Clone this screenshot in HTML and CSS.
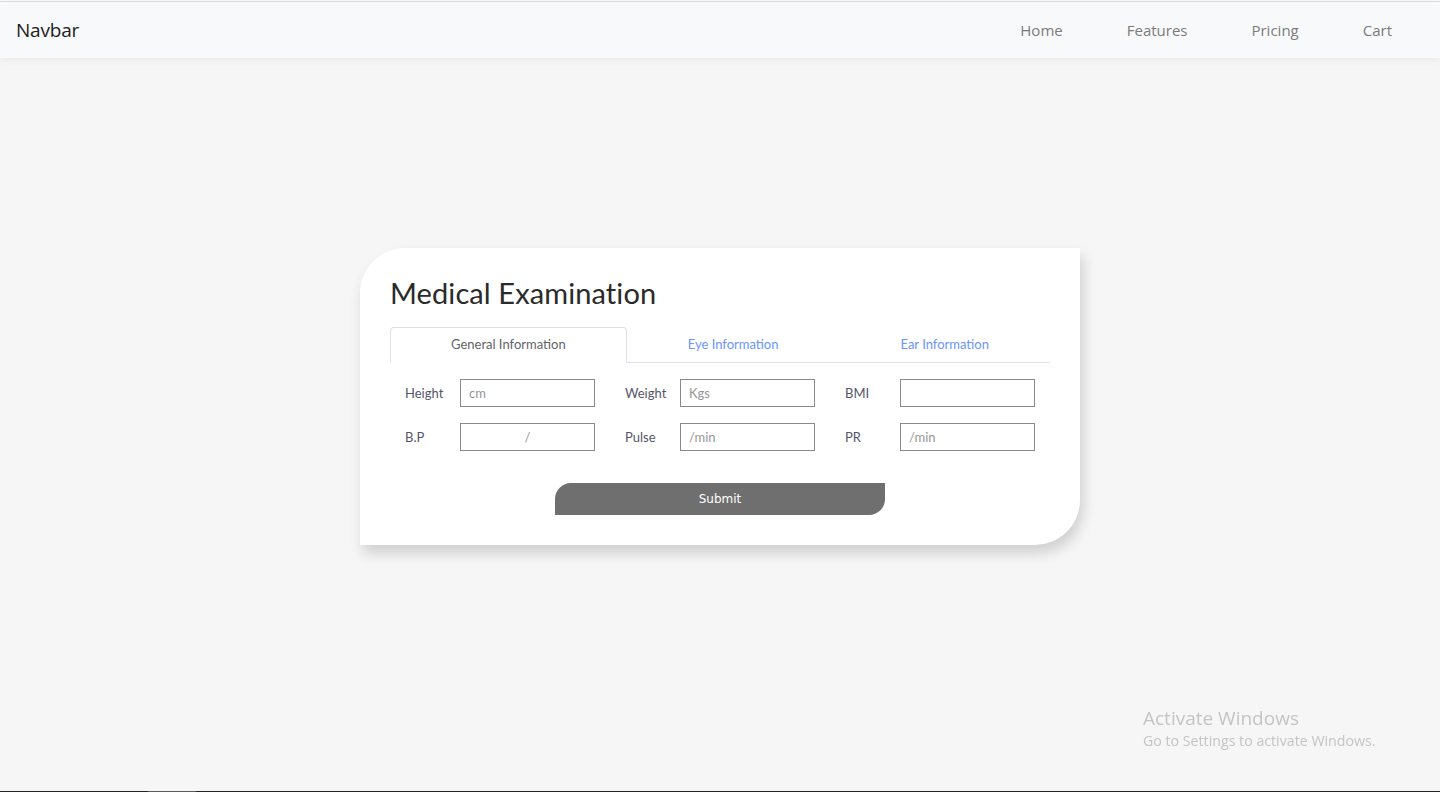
FILE: index.html
```html
<!DOCTYPE html>
<html lang="en">
<head>
<meta charset="utf-8">
<title>Medical Examination</title>
<link rel="stylesheet" href="styles.css">
</head>
<body>
<div class="topline"></div>
<nav class="navbar">
  <a class="brand" href="#">Navbar</a>
  <ul class="nav-links">
    <li><a href="#">Home</a></li>
    <li><a href="#">Features</a></li>
    <li><a href="#">Pricing</a></li>
    <li><a href="#">Cart</a></li>
  </ul>
</nav>
<main class="page">
  <section class="card">
    <h2 class="card-title">Medical Examination</h2>
    <ul class="tabs">
      <li class="tab active">General Information</li>
      <li class="tab">Eye Information</li>
      <li class="tab">Ear Information</li>
    </ul>
    <form class="tab-pane">
      <div class="fields">
        <label class="field"><span class="lbl">Height</span><input type="text" placeholder="cm"></label>
        <label class="field"><span class="lbl">Weight</span><input type="text" placeholder="Kgs"></label>
        <label class="field"><span class="lbl">BMI</span><input type="text"></label>
        <label class="field"><span class="lbl">B.P</span><input type="text" class="center" placeholder="/"></label>
        <label class="field"><span class="lbl">Pulse</span><input type="text" placeholder="/min"></label>
        <label class="field"><span class="lbl">PR</span><input type="text" placeholder="/min"></label>
      </div>
      <div class="actions">
        <button type="button" class="submit">Submit</button>
      </div>
    </form>
  </section>
</main>
<div class="watermark">
  <div class="wm-title">Activate Windows</div>
  <div class="wm-sub">Go to Settings to activate Windows.</div>
</div>
<div class="taskbar-edge"><span class="seg"></span></div>
</body>
</html>
```
FILE: styles.css
```css
* { box-sizing: border-box; }
html, body { margin: 0; padding: 0; }
body {
  background: #f6f6f6;
  font-family: "Lato", "Noto Sans", sans-serif;
  height: 792px;
  overflow: hidden;
}
.topline { height: 1px; background: #fbfbfb; }
.navbar {
  height: 57px;
  border-top: 1px solid #dcdcdc;
  background: #f8f9fa;
  display: flex;
  align-items: center;
  justify-content: space-between;
  padding: 0 16px;
  box-shadow: 0 2px 8px rgba(0,0,0,0.06);
  position: relative;
  z-index: 1;
}
.brand {
  font-family: "Open Sans", "Noto Sans", sans-serif;
  font-size: 19px;
  color: #1c1c1c;
  text-decoration: none;
  letter-spacing: -0.2px;
}
.nav-links {
  list-style: none;
  display: flex;
  margin: 0;
  padding: 0;
}
.nav-links a {
  display: block;
  padding: 0 32px;
  font-family: "Open Sans", "Noto Sans", sans-serif;
  font-size: 15px;
  color: #7b7b7c;
  text-decoration: none;
}
.page {
  display: flex;
  justify-content: center;
  padding-top: 190px;
}
.card {
  width: 720px;
  background: #fff;
  border-radius: 45px 0 45px 0;
  box-shadow: 3px 8px 14px rgba(0,0,0,0.16);
  padding: 30px 30px 30px;
}
.card-title {
  margin: 0 0 19px;
  font-family: "Lato", sans-serif;
  font-weight: 400;
  font-size: 29px;
  line-height: 30px;
  color: #2a2a2a;
  letter-spacing: 0.1px;
}
.tabs {
  list-style: none;
  margin: 0;
  padding: 0;
  display: flex;
  border-bottom: 1px solid #dee2e6;
}
.tab {
  flex: 1 1 auto;
  text-align: center;
  font-family: "Lato", sans-serif;
  font-size: 13px;
  line-height: 20px;
  padding: 6px 16px 8px;
  color: #6b94ff;
  border: 1px solid transparent;
  border-radius: 4px 4px 0 0;
  margin-bottom: -1px;
  cursor: pointer;
}
.tab.active {
  color: #5f6468;
  background: #fff;
  border-color: #dee2e6 #dee2e6 #fff;
}
.tab-pane {
  margin: 0;
  padding: 16px 0 0 15px;
}
.fields {
  display: grid;
  grid-template-columns: repeat(3, 220px);
  row-gap: 16px;
}
.field {
  display: flex;
  align-items: center;
}
.lbl {
  width: 55px;
  font-family: "Lato", sans-serif;
  font-size: 13px;
  color: #55556a;
}
.field input {
  width: 135px;
  height: 28px;
  border: 1px solid #8a8a8a;
  border-radius: 0;
  padding: 0 8px;
  font-family: "Lato", sans-serif;
  font-size: 13px;
  color: #333;
  background: #fff;
  outline: none;
}
.field input::placeholder { color: #969696; }
.field input.center { text-align: center; }
.actions {
  display: flex;
  justify-content: center;
  padding-top: 32px;
  padding-right: 15px;
}
.submit {
  width: 330px;
  height: 32px;
  border: none;
  background: #6f6f6f;
  color: #fff;
  border-radius: 16px 0 16px 0;
  font-family: "DejaVu Sans", sans-serif;
  font-size: 12px;
  cursor: pointer;
}
.watermark {
  position: fixed;
  left: 1143px;
  top: 706px;
  font-family: "Open Sans", "Noto Sans", sans-serif;
  color: #c4c4c4;
}
.wm-title { font-size: 19px; line-height: 24px; }
.wm-sub { font-size: 14.2px; line-height: 22px; }
.taskbar-edge {
  position: fixed;
  left: 0;
  right: 0;
  bottom: 0;
  height: 1px;
  background: #222;
}
.taskbar-edge .seg {
  display: block;
  margin-left: 148px;
  width: 48px;
  height: 1px;
  background: #5a5a5a;
}
```
